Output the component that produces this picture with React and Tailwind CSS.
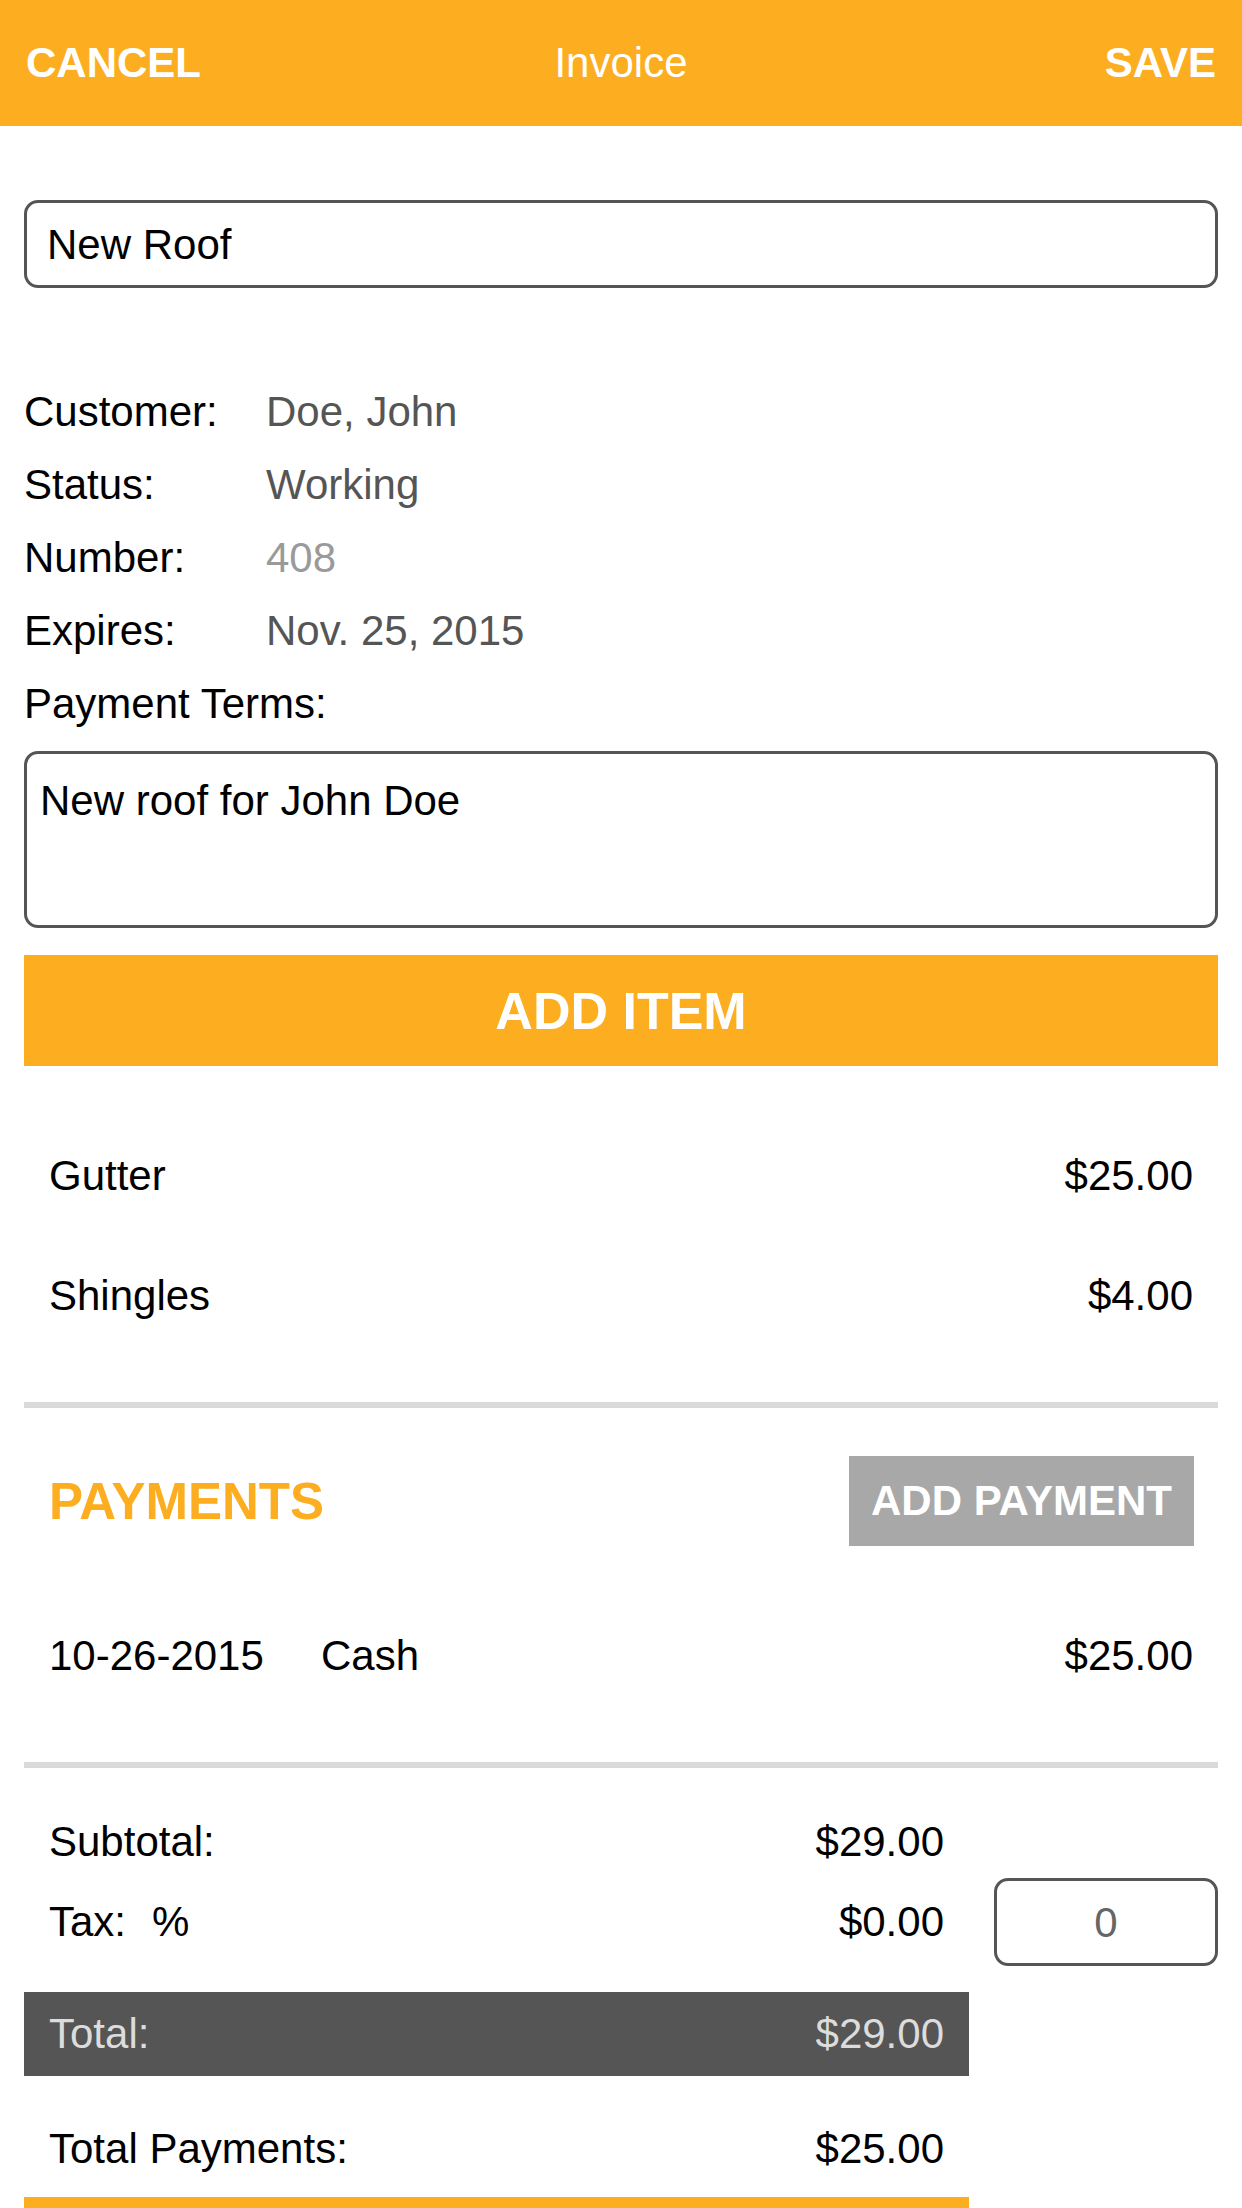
export default function App() {
  const font = { fontFamily: '"Liberation Sans", Arial, Helvetica, sans-serif' };
  return (
    <div className="w-[1242px] min-h-[2208px] bg-white text-black overflow-hidden" style={font}>
      {/* Header */}
      <div className="h-[126px] bg-[#fdad20] grid grid-cols-[1fr_auto_1fr] items-center px-[26px] text-white text-[42px] leading-none">
        <span className="font-bold justify-self-start">CANCEL</span>
        <span className="font-normal">Invoice</span>
        <span className="font-bold justify-self-end">SAVE</span>
      </div>

      <div className="px-[24px]">
        {/* Title input */}
        <div className="mt-[74px] h-[88px] border-[3px] border-[#555555] rounded-[14px] flex items-center pl-[20px] text-[42px]">
          New Roof
        </div>

        {/* Details */}
        <div className="mt-[87px] flex flex-col text-[42px]">
          <div className="h-[73px] leading-[73px] flex">
            <span className="w-[242px]">Customer:</span>
            <span className="text-[#555555]">Doe, John</span>
          </div>
          <div className="h-[73px] leading-[73px] flex">
            <span className="w-[242px]">Status:</span>
            <span className="text-[#555555]">Working</span>
          </div>
          <div className="h-[73px] leading-[73px] flex">
            <span className="w-[242px]">Number:</span>
            <span className="text-[#9a9a9a]">408</span>
          </div>
          <div className="h-[73px] leading-[73px] flex">
            <span className="w-[242px]">Expires:</span>
            <span className="text-[#555555]">Nov. 25, 2015</span>
          </div>
          <div className="h-[73px] leading-[73px] flex">
            <span>Payment Terms:</span>
          </div>
        </div>

        {/* Textarea */}
        <div className="mt-[11px] h-[177px] border-[3px] border-[#555555] rounded-[14px] pt-[23px] pl-[13px] text-[42px] leading-[48px]">
          New roof for John Doe
        </div>

        {/* Add item */}
        <div className="mt-[27px] h-[111px] bg-[#fdad20] flex items-center justify-center text-white font-bold text-[52px] leading-none">
          ADD ITEM
        </div>

        {/* Items */}
        <div className="mt-[50px] flex flex-col text-[42px]">
          <div className="h-[120px] leading-[120px] flex justify-between px-[25px]">
            <span>Gutter</span>
            <span>$25.00</span>
          </div>
          <div className="h-[120px] leading-[120px] flex justify-between px-[25px]">
            <span>Shingles</span>
            <span>$4.00</span>
          </div>
        </div>

        <div className="mt-[46px] h-[6px] bg-[#dadada]" />

        {/* Payments header */}
        <div className="mt-[48px] flex items-center justify-between pl-[25px] pr-[24px]">
          <span className="text-[#fdad20] font-bold text-[51px] leading-none">PAYMENTS</span>
          <div className="w-[345px] h-[90px] bg-[#a8a8a8] flex items-center justify-center text-white font-bold text-[42px] leading-none">
            ADD PAYMENT
          </div>
        </div>

        <div className="mt-[50px] h-[120px] leading-[120px] flex justify-between px-[25px] text-[42px]">
          <div className="flex">
            <span className="w-[272px]">10-26-2015</span>
            <span>Cash</span>
          </div>
          <span>$25.00</span>
        </div>

        <div className="mt-[46px] h-[6px] bg-[#dadada]" />

        {/* Totals */}
        <div className="mt-[38px] flex items-start text-[42px]">
          <div className="w-[945px] flex flex-col">
            <div className="h-[72px] leading-[72px] flex justify-between px-[25px]">
              <span>Subtotal:</span>
              <span>$29.00</span>
            </div>
            <div className="h-[88px] leading-[88px] flex justify-between px-[25px]">
              <span>
                Tax:<span className="ml-[26px]">%</span>
              </span>
              <span>$0.00</span>
            </div>
            <div className="mt-[26px] h-[84px] leading-[84px] bg-[#555555] text-[#dcdcdc] flex justify-between px-[25px]">
              <span>Total:</span>
              <span>$29.00</span>
            </div>
            <div className="mt-[34px] h-[78px] leading-[78px] flex justify-between px-[25px]">
              <span>Total Payments:</span>
              <span>$25.00</span>
            </div>
            <div className="mt-[9px] h-[84px] bg-[#fdad20]" />
          </div>
          <div className="ml-[25px] mt-[72px] w-[224px] h-[88px] border-[3px] border-[#555555] rounded-[14px] flex items-center justify-center text-[#666666] text-[42px]">
            0
          </div>
        </div>
      </div>
    </div>
  );
}
